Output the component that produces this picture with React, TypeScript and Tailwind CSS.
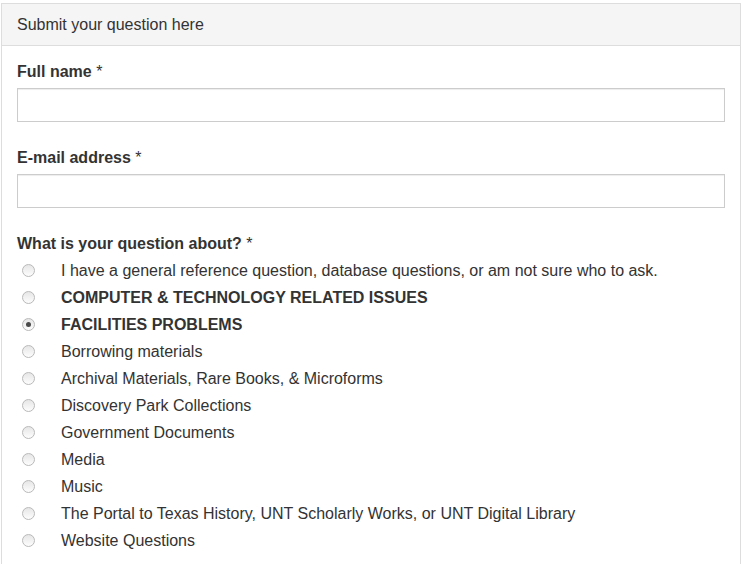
import React from "react";

const options: { label: string; bold?: boolean; checked?: boolean }[] = [
  { label: "I have a general reference question, database questions, or am not sure who to ask." },
  { label: "COMPUTER & TECHNOLOGY RELATED ISSUES", bold: true },
  { label: "FACILITIES PROBLEMS", bold: true, checked: true },
  { label: "Borrowing materials" },
  { label: "Archival Materials, Rare Books, & Microforms" },
  { label: "Discovery Park Collections" },
  { label: "Government Documents" },
  { label: "Media" },
  { label: "Music" },
  { label: "The Portal to Texas History, UNT Scholarly Works, or UNT Digital Library" },
  { label: "Website Questions" },
];

function Radio({ checked }: { checked?: boolean }) {
  return (
    <span className="flex h-[13px] w-[13px] shrink-0 items-center justify-center rounded-full border border-[#b9b9b9] bg-gradient-to-b from-[#e6e6e6] to-[#fdfdfd]">
      {checked && <span className="h-[5px] w-[5px] rounded-full bg-[#4a4a4a]" />}
    </span>
  );
}

export default function App() {
  return (
    <div
      className="min-h-[564px] bg-white pt-[3px] pl-[1px] text-[#333]"
      style={{ fontFamily: '"Liberation Sans", Arial, sans-serif' }}
    >
      <div className="w-[740px] border border-b-0 border-[#ddd]">
        <div className="h-[42px] border-b border-[#ddd] bg-[#f5f5f5] px-[15px] pt-[11px] text-[16px] leading-[20px]">
          Submit your question here
        </div>
        <div className="px-[15px] pt-[16px] pb-[20px]">
          <div className="text-[16px] font-bold leading-[20px]">
            Full name <span className="font-normal">*</span>
          </div>
          <div className="mt-[6px] h-[34px] w-[708px] border border-[#ccc] shadow-[inset_0_1px_1px_rgba(0,0,0,0.075)]" />

          <div className="mt-[26px] text-[16px] font-bold leading-[20px]">
            E-mail address <span className="font-normal">*</span>
          </div>
          <div className="mt-[6px] h-[34px] w-[708px] border border-[#ccc] shadow-[inset_0_1px_1px_rgba(0,0,0,0.075)]" />

          <div className="mt-[26px] text-[16px] font-bold leading-[20px]">
            What is your question about? <span className="font-normal">*</span>
          </div>
          <div className="mt-[3px] flex flex-col">
            {options.map((o) => (
              <div key={o.label} className="flex h-[27px] items-center">
                <span className="ml-[5px] mr-[26px] flex">
                  <Radio checked={o.checked} />
                </span>
                <span className={"text-[16px] leading-[20px] " + (o.bold ? "font-bold" : "")}>
                  {o.label}
                </span>
              </div>
            ))}
          </div>
        </div>
      </div>
    </div>
  );
}
